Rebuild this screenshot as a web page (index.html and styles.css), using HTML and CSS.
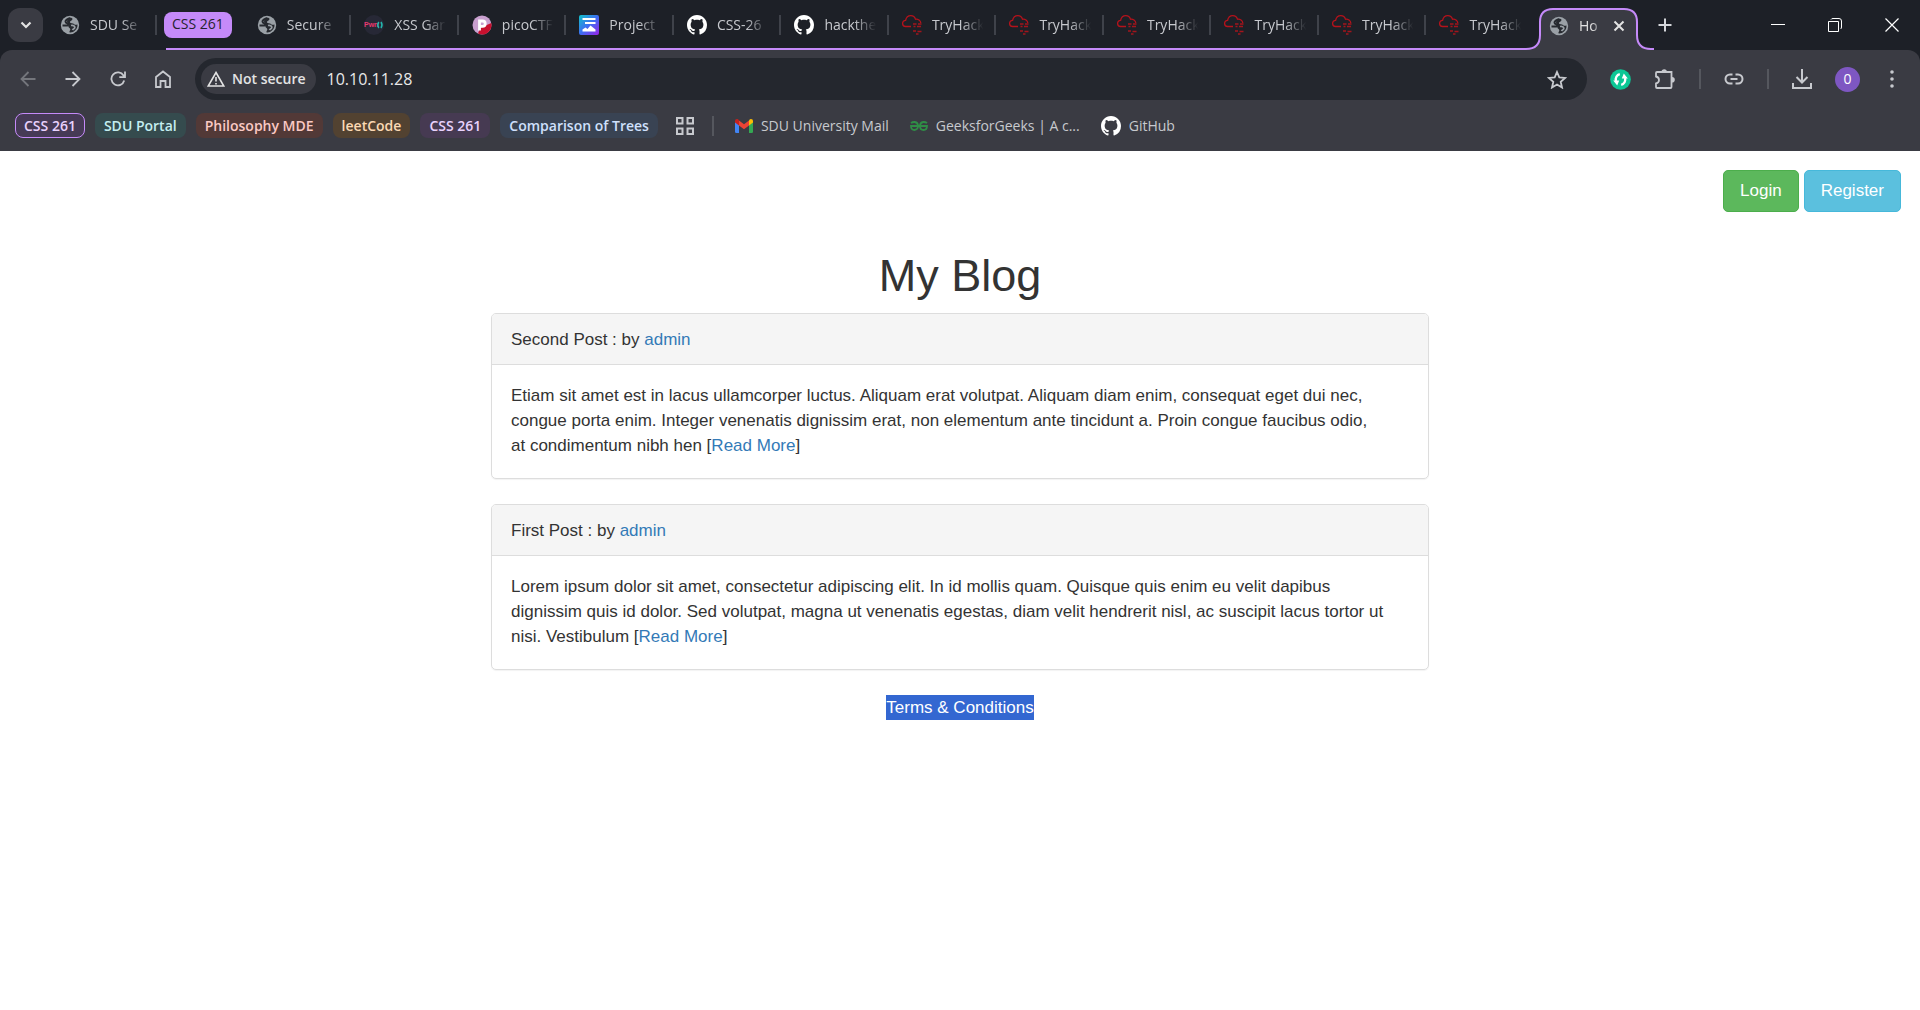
FILE: index.html
```html
<!DOCTYPE html>
<html lang="en">
<head>
<meta charset="utf-8">
<meta name="viewport" content="width=device-width, initial-scale=1">
<title>Home</title>
<link rel="stylesheet" href="styles.css">
</head>
<body>
<svg class="defs" aria-hidden="true">
  <symbol id="globe" viewBox="0 0 20 20"><circle cx="10" cy="10" r="9.200" fill="#9aa0a6"/><path d="M10 3C8 4 5.500 4.500 5.500 6.500S8 8 8.500 9s-1 1.500-2 1.500H2.500" fill="none" stroke="#26292f" stroke-width="2"/><path d="M10.500 2.500c2 .5 2.500 1.500 1.500 2.500S9.500 6.500 10 7.500s3 .5 4 1.500 1.500 1 3.500.5c.3 3-1.500 6-4.500 7.500-1.500.5-3 .7-3.500.3-.5-1.300 1-1.800.8-3S9 13 8.500 12s.3-2 .2-3-2-1.500-1.700-3 1.500-2.500 3.500-3.500z" fill="#26292f"/><path d="M11 10.500c2-.5 4 .5 3.800 2s-1.800 1.500-2.300 2.500" fill="none" stroke="#9aa0a6" stroke-width="1.800"/></symbol>
  <symbol id="github" viewBox="0 0 16 16"><path fill="#fff" d="M8 0C3.580 0 0 3.580 0 8c0 3.540 2.290 6.530 5.470 7.590.4.070.55-.17.55-.38 0-.19-.01-.82-.01-1.490-2.010.37-2.530-.49-2.690-.94-.09-.23-.48-.94-.82-1.130-.28-.15-.68-.52-.01-.53.63-.01 1.080.58 1.230.82.72 1.210 1.870.87 2.330.66.07-.52.28-.87.51-1.070-1.780-.2-3.640-.89-3.640-3.950 0-.87.31-1.590.82-2.150-.08-.2-.36-1.020.08-2.120 0 0 .67-.21 2.200.82.64-.18 1.320-.27 2-.27s1.360.09 2 .27c1.530-1.040 2.200-.82 2.200-.82.44 1.100.16 1.920.08 2.120.51.56.82 1.270.82 2.150 0 3.070-1.870 3.750-3.650 3.950.29.25.54.73.54 1.480 0 1.070-.01 1.930-.01 2.200 0 .21.15.46.55.38A8.010 8.010 0 0 0 16 8c0-4.420-3.580-8-8-8z"/></symbol>
  <symbol id="thm" viewBox="0 0 20 20"><path d="M9 11.500H3.800A3.100 3.100 0 0 1 3.600 5.300C4.200 2.500 6.200.7 8.800.7c2.300 0 4 1.300 4.700 3.500 2.600-.4 5 1.200 5.300 3.800" fill="none" stroke="#b5121b" stroke-width="1.300"/><path d="M11 9h3.500M16 9h3.500M11.500 11.500h2M15 11.500h4M11 16h3M15.500 16.500h4M14 19h2.500" stroke="#a3141c" stroke-width="1.300"/></symbol>
</svg>

<header class="browser">
  <div class="titlebar">
    <button class="tab-search" aria-label="Search tabs"><svg width="12" height="8" viewBox="0 0 12 8"><path d="M1.500 1.500 6 6l4.500-4.500" fill="none" stroke="#e3e3e3" stroke-width="2.200"/></svg></button>
    <div class="tab tab-first"><svg class="fav"><use href="#globe"/></svg><span class="tab-title">SDU Se</span></div>
    <div class="group">
      <span class="group-name">CSS 261</span>
      <div class="group-tabs">
        <div class="tab"><svg class="fav"><use href="#globe"/></svg><span class="tab-title">Secure</span></div>
        <div class="tab"><svg class="fav" viewBox="0 0 20 20"><circle cx="10" cy="10" r="10" fill="#272836"/><text x="0" y="12" class="pwn">Pwn</text><path d="M14.800 7q-2 3 0 6M17 7q2 3 0 6" fill="none" stroke="#22b8ae" stroke-width="1.500"/></svg><span class="tab-title">XSS Gar</span></div>
        <div class="tab"><svg class="fav" viewBox="0 0 20 20"><circle cx="10" cy="10" r="9.500" fill="#c9a0cf"/><path d="M19.300 8A9.500 9.500 0 0 1 6 18.600L8 13z" fill="#c8102e"/><path d="M7.500 15.500v-9.500h3a2.700 2.700 0 0 1 0 5.400h-3" fill="none" stroke="#fff" stroke-width="2.800"/></svg><span class="tab-title">picoCTF</span></div>
        <div class="tab"><svg class="fav" viewBox="0 0 20 20"><defs><linearGradient id="pg" x1="0" y1="0" x2="1" y2="1"><stop offset="0" stop-color="#12c4c8"/><stop offset=".5" stop-color="#3d6df2"/><stop offset="1" stop-color="#9a22e6"/></linearGradient></defs><rect width="20" height="20" rx="2" fill="url(#pg)"/><path d="M3.500 4h13M6 8h10.500" stroke="#fff" stroke-width="2"/><path d="M3.500 16.500v-2l3-2 2 1.500 3-3.500 5 4v2z" fill="#fff"/></svg><span class="tab-title">Project</span></div>
        <div class="tab"><svg class="fav"><use href="#github"/></svg><span class="tab-title">CSS-26</span></div>
        <div class="tab"><svg class="fav"><use href="#github"/></svg><span class="tab-title">hackthe</span></div>
        <div class="tab"><svg class="fav"><use href="#thm"/></svg><span class="tab-title">TryHack</span></div>
        <div class="tab"><svg class="fav"><use href="#thm"/></svg><span class="tab-title">TryHack</span></div>
        <div class="tab"><svg class="fav"><use href="#thm"/></svg><span class="tab-title">TryHack</span></div>
        <div class="tab"><svg class="fav"><use href="#thm"/></svg><span class="tab-title">TryHack</span></div>
        <div class="tab"><svg class="fav"><use href="#thm"/></svg><span class="tab-title">TryHack</span></div>
        <div class="tab"><svg class="fav"><use href="#thm"/></svg><span class="tab-title">TryHack</span></div>
      </div>
    </div>
    <div class="tab-active">
      <svg class="tab-shape" width="130" height="50" viewBox="0 0 130 50"><path d="M0 49h2q14 0 14-14V22q0-13 13-13h71q13 0 13 13v13q0 14 14 14h3v1H0z" fill="#3a3b43"/><path d="M0 49h2q14 0 14-14V22q0-13 13-13h71q13 0 13 13v13q0 14 14 14h3" fill="none" stroke="#c58af9" stroke-width="2"/></svg>
      <svg class="fav"><use href="#globe"/></svg>
      <span class="tab-title">Ho</span>
      <button class="icon-btn" aria-label="Close tab"><svg width="12" height="12" viewBox="0 0 12 12"><path d="M1.500 1.500l9 9M10.500 1.500l-9 9" stroke="#e3e3e3" stroke-width="2"/></svg></button>
    </div>
    <button class="icon-btn new-tab" aria-label="New tab"><svg width="14" height="14" viewBox="0 0 14 14"><path d="M7 .5v13M.5 7h13" stroke="#d5d7dc" stroke-width="2"/></svg></button>
    <div class="window-controls">
      <button class="icon-btn" aria-label="Minimize"><svg width="14" height="14" viewBox="0 0 14 14"><path d="M0 6.500h14" stroke="#fff"/></svg></button>
      <button class="icon-btn" aria-label="Restore"><svg width="14" height="14" viewBox="0 0 14 14"><path d="M.5 3.500h10v10H.5zM3 1.500q.5-1 2-1h6q2.500 0 2.500 2.500v6q0 1.500-1 2" fill="none" stroke="#fff"/></svg></button>
      <button class="icon-btn" aria-label="Close"><svg width="14" height="14" viewBox="0 0 14 14"><path d="M.5.5l13 13M13.500.5l-13 13" stroke="#fff" stroke-width="1.200"/></svg></button>
    </div>
  </div>

  <div class="chrome">
    <div class="toolbar">
      <div class="nav">
        <button class="icon-btn dim" aria-label="Back"><svg width="16" height="16" viewBox="0 0 16 16"><path d="M15.500 8H2M8.500 1 1.500 8l7 7" class="line"/></svg></button>
        <button class="icon-btn" aria-label="Forward"><svg width="16" height="16" viewBox="0 0 16 16"><path d="M.5 8H14M7.500 1l7 7-7 7" class="line"/></svg></button>
        <button class="icon-btn" aria-label="Reload"><svg width="16" height="16" viewBox="0 0 16 16"><path d="M14.200 9.500A6.500 6.500 0 1 1 13.500 4.500L15 6.200M15 .5v5.700H9.300" class="line"/></svg></button>
        <button class="icon-btn" aria-label="Home"><svg width="16" height="18" viewBox="0 0 16 18"><path d="M1 7 8 1.500 15 7v10h-4.500v-6h-5v6H1z" class="line"/></svg></button>
      </div>
      <div class="omnibox">
        <button class="site-chip"><svg width="18" height="16" viewBox="0 0 18 16"><path d="M9 1.500 16.800 15H1.200zM9 6v4.500M9 12v1.600" fill="none" stroke="#e3e3e3" stroke-width="1.600"/></svg>Not secure</button>
        <input class="url" type="text" value="10.10.11.28" aria-label="Address">
        <button class="icon-btn" aria-label="Bookmark this page"><svg width="20" height="19" viewBox="0 0 20 19"><path d="M10 2l2.300 5.400 5.800.5-4.400 3.900 1.300 5.700-5-3-5 3 1.300-5.700L1.900 7.900l5.800-.5z" class="line"/></svg></button>
      </div>
      <div class="actions">
        <button class="icon-btn" aria-label="Extension"><svg width="21" height="21" viewBox="0 0 21 21"><circle cx="10.500" cy="10.500" r="10.300" fill="#0cc795"/><path d="M9.800 5.200A5.300 5.300 0 0 0 6 12" fill="none" stroke="#fff" stroke-width="2.400"/><path d="M11.200 15.800A5.300 5.300 0 0 0 15 9" fill="none" stroke="#fff" stroke-width="2.400"/><path d="M3.200 11.500h6l-2 5zM17.800 9.500h-6l2-5z" fill="#fff"/></svg></button>
        <button class="icon-btn" aria-label="Extensions"><svg width="22" height="22" viewBox="0 0 22 22"><path d="M3 4h14.500v15q0 1-1 1H3q-1 0-1-1v-3.500q3-.7 3-3.500T2 8.500V5q0-1 1-1z" class="line"/><path d="M7.500 4a2.700 2.700 0 0 1 5.400 0zM18 9a2.800 2.800 0 0 1 0 5.600z" fill="#c7c9ce"/></svg></button>
        <span class="divider"></span>
        <button class="icon-btn" aria-label="Copy link"><svg width="20" height="12" viewBox="0 0 20 12"><path d="M8.500 1.500H6a4.500 4.500 0 0 0 0 9h2.500M11.500 1.500H14a4.500 4.500 0 0 1 0 9h-2.500M6.500 6h7" class="line wide"/></svg></button>
        <span class="divider"></span>
        <button class="icon-btn" aria-label="Downloads"><svg width="20" height="20" viewBox="0 0 20 20"><path d="M10 0v12M4.500 8l5.500 5.500L15.500 8M1 14v5h18v-5" class="line wide"/></svg></button>
        <button class="avatar" aria-label="Profile">0</button>
        <button class="icon-btn" aria-label="Menu"><svg width="4" height="18" viewBox="0 0 4 18"><path d="M2 2h0M2 9h0M2 16h0" stroke="#c7c9ce" stroke-width="3.600" stroke-linecap="round"/></svg></button>
      </div>
    </div>

    <nav class="bookmarks" aria-label="Bookmarks">
      <button class="chip outlined">CSS 261</button>
      <button class="chip teal">SDU Portal</button>
      <button class="chip red">Philosophy MDE</button>
      <button class="chip orange">leetCode</button>
      <button class="chip purple">CSS 261</button>
      <button class="chip blue">Comparison of Trees</button>
      <button class="icon-btn apps" aria-label="Apps"><svg width="20" height="20" viewBox="0 0 20 20"><path d="M2 2h5.500v5.500H2zM12.500 2H18v5.500h-5.500zM2 12.500h5.500V18H2zM12.500 12.500H18V18h-5.500z" class="line wide"/></svg></button>
      <span class="divider"></span>
      <a class="bookmark" href="#"><svg width="18" height="14" viewBox="0 0 18 14"><path d="M0 2.500 4 5.500V14H1.200Q0 14 0 12.800z" fill="#4285f4"/><path d="M18 2.500 14 5.500V14h2.800q1.200 0 1.200-1.200z" fill="#34a853"/><path d="M4 1.500 9 5.300l5-3.800v5L9 10.300 4 6.500z" fill="#ea4335"/><path d="M0 3.500V2q0-2 2-2 1 0 2 1.200v5.300z" fill="#c5221f"/><path d="M18 3.500V2q0-2-2-2-1 0-2 1.200v5.300z" fill="#fbbc04"/></svg>SDU University Mail</a>
      <a class="bookmark" href="#"><svg width="18" height="10" viewBox="0 0 18 10"><path d="M1 2.200Q2.500.8 4.800 1 8 1.500 8 5T4.500 9Q1 9 1 5h16q0 4-3.500 4T10 5q0-3.500 3.200-4 2.300-.2 3.800 1.200" fill="none" stroke="#2f8d46" stroke-width="1.800"/></svg>GeeksforGeeks | A c...</a>
      <a class="bookmark" href="#"><svg width="20" height="20"><use href="#github"/></svg>GitHub</a>
    </nav>
  </div>
</header>

<main class="page">
  <div class="account">
    <button class="btn btn-success">Login</button>
    <button class="btn btn-info">Register</button>
  </div>
  <div class="container">
    <h1>My Blog</h1>
    <article class="panel">
      <header class="panel-heading">Second Post : by <a href="#">admin</a></header>
      <p class="panel-body">Etiam sit amet est in lacus ullamcorper luctus. Aliquam erat volutpat. Aliquam diam enim, consequat eget dui nec,<br>congue porta enim. Integer venenatis dignissim erat, non elementum ante tincidunt a. Proin congue faucibus odio,<br>at condimentum nibh hen [<a href="#">Read More</a>]</p>
    </article>
    <article class="panel">
      <header class="panel-heading">First Post : by <a href="#">admin</a></header>
      <p class="panel-body">Lorem ipsum dolor sit amet, consectetur adipiscing elit. In id mollis quam. Quisque quis enim eu velit dapibus<br>dignissim quis id dolor. Sed volutpat, magna ut venenatis egestas, diam velit hendrerit nisl, ac suscipit lacus tortor ut<br>nisi. Vestibulum [<a href="#">Read More</a>]</p>
    </article>
    <footer class="terms"><a href="#">Terms &amp; Conditions</a></footer>
  </div>
</main>
</body>
</html>
```

FILE: styles.css
```css
* { box-sizing: border-box; }

body {
  margin: 0;
  background: #fff;
  color: #333;
  font: 17px/25px "Helvetica Neue", "Liberation Sans", Arial, sans-serif;
}

.defs { position: absolute; width: 0; height: 0; }

button { font: inherit; border: 0; padding: 0; cursor: pointer; }
svg { display: block; flex: none; }

/* Browser frame */
.browser {
  background: #1d2027;
  color: #c7c9ce;
  font: 14px/20px "Segoe UI", "Open Sans", sans-serif;
}

.titlebar { display: flex; height: 50px; padding-left: 8px; }

.tab-search {
  display: flex; align-items: center; justify-content: center;
  width: 35px; height: 34px; margin-top: 8px;
  border-radius: 12px; background: #3a3b43;
}

.icon-btn {
  display: flex; align-items: center; justify-content: center;
  background: none; color: #c7c9ce;
}

.line { fill: none; stroke: #c7c9ce; stroke-width: 1.8; }
.line.wide { stroke-width: 2; }
.dim .line { stroke: #74767c; }

.tab {
  display: flex; align-items: center; gap: 10px;
  height: 20px; min-width: 0;
  padding: 0 8px 0 13px;
  border-right: 2px solid #3f424a;
}
.tab-first { width: 114px; margin-top: 15px; padding-left: 17px; }
.fav { width: 20px; height: 20px; }
.tab-title {
  flex: 1; min-width: 0;
  overflow: hidden; white-space: nowrap;
  mask-image: linear-gradient(90deg, #000 55%, transparent 95%);
}
.pwn { font: bold 7px "Liberation Sans", sans-serif; fill: #e8396f; }

.group {
  display: flex; flex: 1; min-width: 0;
  margin-left: 9px;
  border-bottom: 2px solid #c58af9;
}
.group-name {
  flex: none;
  height: 26px; margin: 12px 12px 0 -2px; padding: 2px 8px;
  border-radius: 8px; background: #c58af9; color: #26232d;
}
.group-tabs {
  display: grid; flex: 1; min-width: 0;
  grid-template-columns: repeat(12, minmax(0, 1fr));
  padding-top: 15px;
}
.group-tabs .tab:last-child { border-color: transparent; }

.tab-active {
  position: relative;
  display: flex; align-items: center; gap: 10px;
  width: 130px; margin-left: -10px;
  padding: 2px 29px 0 25px;
  color: #e3e3e3;
}
.tab-active > * { position: relative; }
.tab-active .tab-shape { position: absolute; left: 0; top: 0; }

.new-tab { width: 22px; }
.window-controls {
  display: grid; grid-template-columns: repeat(3, 57px);
  margin-left: 73px;
}

.chrome {
  border-radius: 12px 12px 0 0;
  background: #3a3b43;
}

.toolbar { display: flex; height: 58px; padding-top: 8px; }
.nav { display: grid; grid-template-columns: repeat(4, 45px); height: 42px; margin: 0 10px 0 5px; }
.omnibox {
  display: flex; align-items: center; flex: 1; min-width: 0;
  height: 42px; padding: 0 20px 0 6px;
  border-radius: 21px; background: #24272e;
}
.site-chip {
  display: flex; align-items: center; gap: 7px;
  height: 30px; padding: 0 10px 0 6px;
  border-radius: 15px; background: #3a3b43; color: #e3e3e3;
  font-weight: 600;
}
.url {
  flex: 1; min-width: 0;
  padding: 0 0 0 11px;
  border: 0; background: none; color: #e8e8e8;
  font: 16px/24px "Segoe UI", "Open Sans", sans-serif;
}
.actions { display: flex; align-items: center; gap: 23px; height: 42px; padding: 0 26px 0 23px; }
.divider { width: 2px; height: 20px; background: #55575e; }
.avatar { width: 25px; height: 25px; margin-right: 7px; border-radius: 50%; background: #7e57c2; color: #fff; line-height: 24px; }

.bookmarks { display: flex; align-items: center; height: 43px; padding: 0 15px 8px; gap: 10px; }
.chip {
  height: 25px; padding: 0 9px;
  border-radius: 8px;
  font-weight: 600; line-height: 23px; white-space: nowrap;
}
.outlined { padding: 0 8px; border: 1px solid #c58af9; background: #463a56; color: #e9d2fd; }
.teal { background: #354b4e; color: #c4eef0; }
.red { background: #523937; color: #fac9c4; }
.orange { background: #524231; color: #fbd9b4; }
.purple { background: #463a52; color: #e9d2fd; }
.blue { background: #394353; color: #cfe0fc; }
.apps { margin: 0 7px; }
.bookmark {
  display: flex; align-items: center; gap: 8px;
  margin-left: 11px;
  color: #c7c9ce; text-decoration: none; white-space: nowrap;
}

/* Blog page */
.page a { color: #337ab7; text-decoration: none; }
.account { display: flex; justify-content: flex-end; gap: 5px; padding: 19px 19px 0; }
.btn {
  height: 42px; padding: 0 16px 2px;
  border: 1px solid; border-radius: 5px;
  color: #fff;
}
.btn-success { background: #5cb85c; border-color: #4cae4c; }
.btn-info { background: #5bc0de; border-color: #46b8da; }

.container { max-width: 938px; margin: 0 auto; }
h1 { margin: 39px 0 12px; font-size: 45px; line-height: 50px; font-weight: 500; text-align: center; }

.panel {
  margin-bottom: 25px;
  border: 1px solid #ddd; border-radius: 5px;
  box-shadow: 0 1px 1px rgba(0, 0, 0, .05);
}
.panel-heading {
  padding: 13px 19px 12px;
  border-bottom: 1px solid #ddd; border-radius: 4px 4px 0 0;
  background: #f5f5f5;
}
.panel-body { margin: 0; padding: 18px 19px 20px; }

.terms { text-align: center; }
.terms a { display: inline-block; background: #3367d1; color: #fff; }
```
